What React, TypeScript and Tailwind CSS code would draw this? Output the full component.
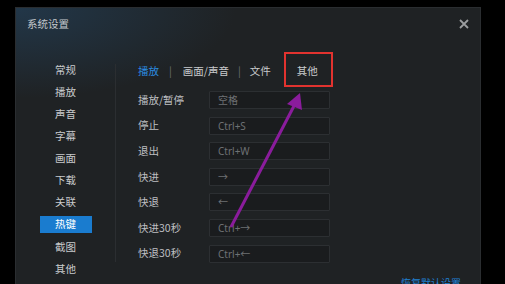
import React from "react";

const sideItems = ["常规", "播放", "声音", "字幕", "画面", "下载", "关联", "热键", "截图", "其他"];
const rows: [string, string][] = [
  ["播放/暂停", "空格"],
  ["停止", "Ctrl+S"],
  ["退出", "Ctrl+W"],
  ["快进", "→"],
  ["快退", "←"],
  ["快进30秒", "Ctrl+→"],
  ["快退30秒", "Ctrl+←"],
];

export default function App() {
  return (
    <div
      className="relative w-[505px] h-[284px] bg-black overflow-hidden pt-[7px] pl-[15px]"
      style={{ fontFamily: '"Noto Sans CJK SC", "Noto Sans", sans-serif' }}
    >
      <div className="relative w-[466px] h-[300px] bg-[radial-gradient(ellipse_220px_90px_at_0_0,#223749,#1f2224)] border border-[#2a2d30] flex flex-col">
        {/* title bar */}
        <div className="h-[33px] flex items-center justify-between pl-[11px] pr-[10px]">
          <span className="text-[10.5px] text-[#c3c7cb] leading-none">系统设置</span>
          <svg width="10" height="10" viewBox="0 0 10 10" className="mr-[1px] mt-[-2px]">
            <path d="M1 1 L9 9 M9 1 L1 9" stroke="#9b9d9f" strokeWidth="1.8" />
          </svg>
        </div>
        <div className="flex">
          {/* sidebar */}
          <div className="w-[99px] flex flex-col pt-[18px]">
            {sideItems.map((s) => (
              <div key={s} className="h-[22.1px] shrink-0 flex items-center justify-center">
                <span
                  className={
                    "w-[52px] h-[17px] flex items-center justify-center text-[10.5px] leading-none " +
                    (s === "热键" ? "bg-[#1a7ccf] text-white" : "text-[#c9cbcd]")
                  }
                >
                  {s}
                </span>
              </div>
            ))}
          </div>
          <div className="w-px h-[198px] mt-[23px] bg-[#2b2e31]" />
          {/* content */}
          <div className="relative flex-1 pl-[22px] pt-[17px]">
            <div className="h-[27px] flex items-center text-[10.5px] leading-none">
              <span className="text-[#2b8be0]">播放</span>
              <span className="text-[#6d7073] ml-[10px]">|</span>
              <span className="text-[#c9cbcd] ml-[11px]">画面/声音</span>
              <span className="text-[#6d7073] ml-[9px]">|</span>
              <span className="text-[#c9cbcd] ml-[9px]">文件</span>
              <span className="relative text-[#c9cbcd] ml-[26px]">
                其他
                <span className="absolute left-[-13px] top-[-14px] w-[49px] h-[35px] border-2 border-[#e2332f]" />
              </span>
            </div>
            <div className="flex flex-col gap-[7.6px] mt-[6px]">
              {rows.map(([l, v]) => (
                <div key={l} className="flex items-center h-[18px]">
                  <span className="w-[71px] text-[10.5px] text-[#bdbfc1] leading-none">{l}</span>
                  <div className="w-[121px] h-[18px] bg-[#1a1c1e] border border-[#2c2f32] rounded-[1px] flex items-center pl-[8px] text-[10px] text-[#6e7174] leading-none" style={{ fontFamily: '"Noto Sans", "Noto Sans CJK SC", sans-serif' }}>
                    {v}
                  </div>
                </div>
              ))}
            </div>
          </div>
        </div>
        <div className="absolute left-[385px] top-[270px] text-[10px] text-[#1f80d2] leading-none">恢复默认设置</div>
      </div>
      {/* annotation arrow */}
      <svg className="absolute left-0 top-0" width="505" height="284" viewBox="0 0 505 284">
        <line x1="231" y1="227" x2="295" y2="104" stroke="#8a1c9c" strokeWidth="3" />
        <polygon points="300,93 287,104 302,110" fill="#8a1c9c" />
      </svg>
    </div>
  );
}
